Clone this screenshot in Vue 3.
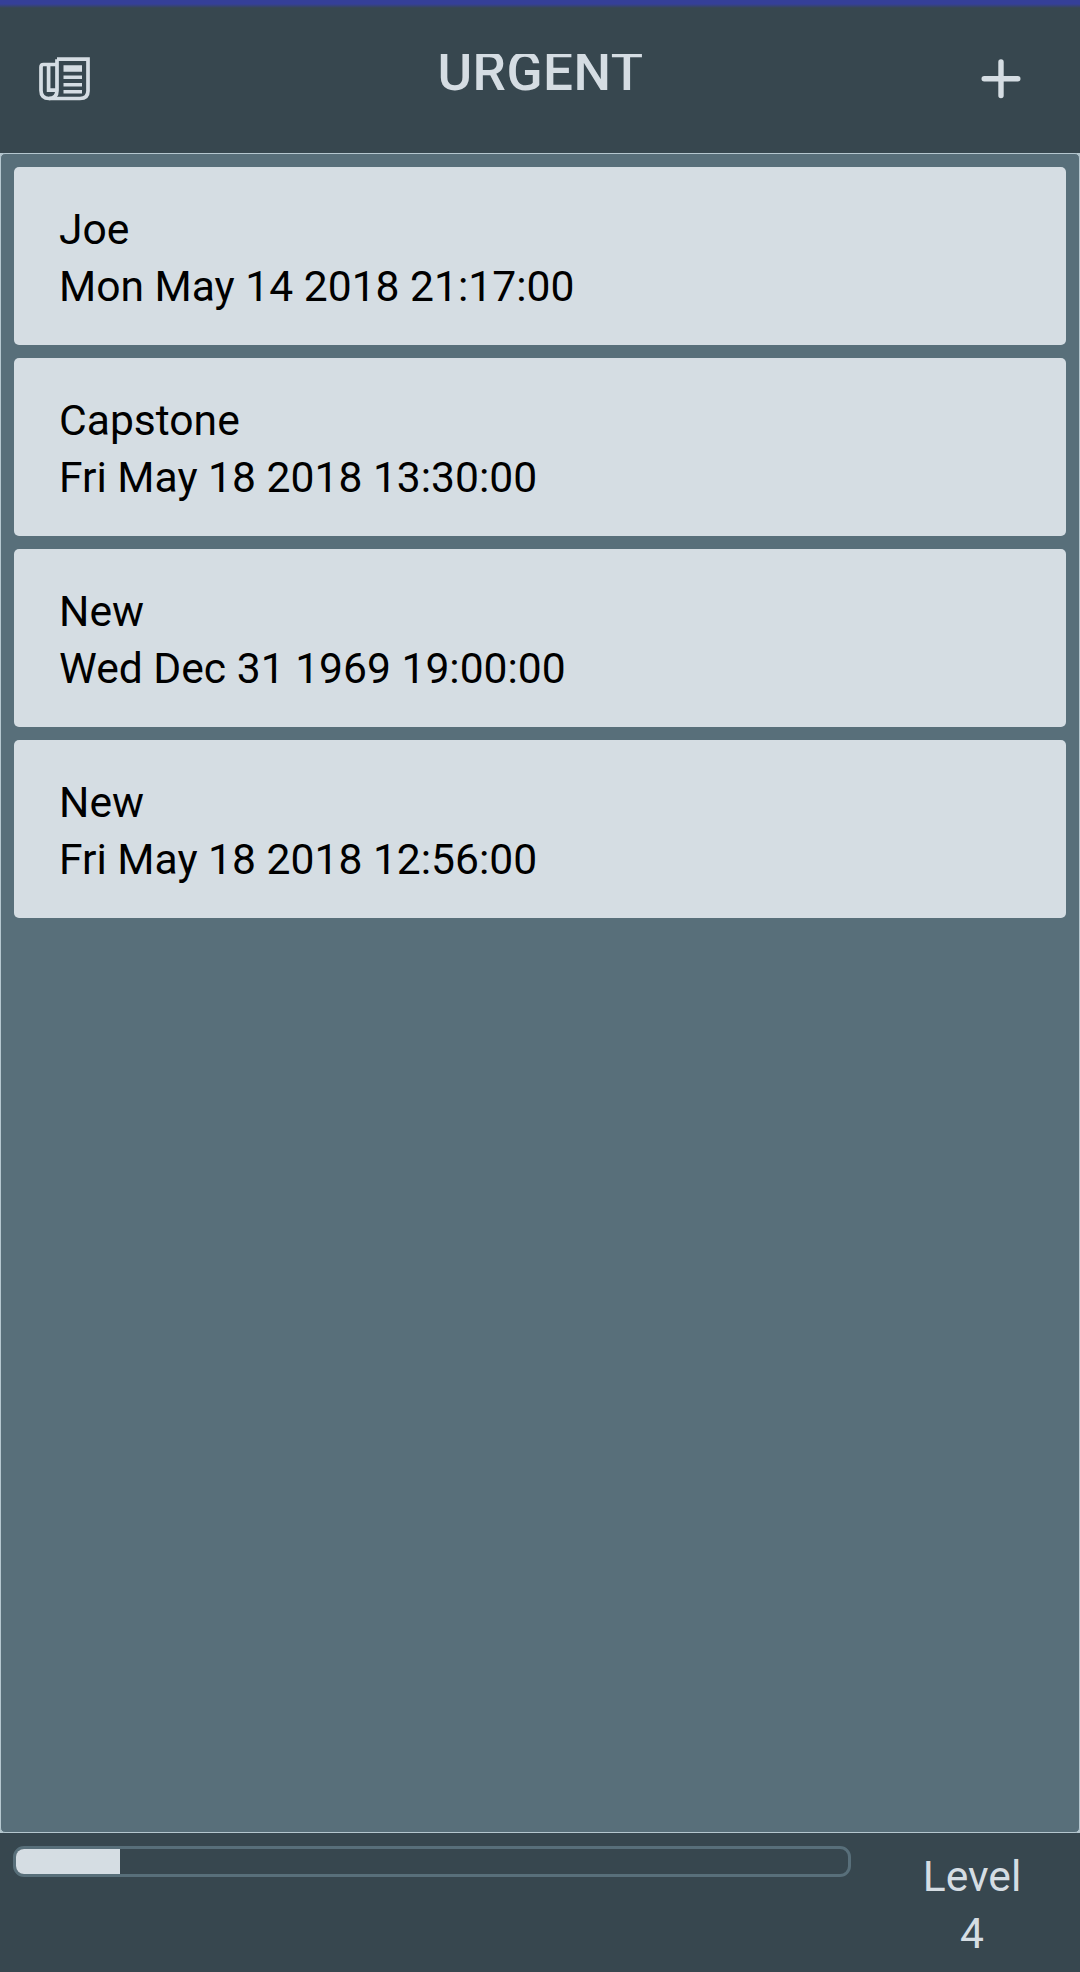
<template>
  <div class="screen">
    <header class="header">
      <button class="icon-button" aria-label="News">
        <svg class="icon" viewBox="0 0 52 44" width="52" height="44">
          <path d="M18 2.2 H49 V34 Q49 41.5 41 41.5 H10 Q2 41.5 2 33.5 V10 Q2 7.5 4.5 7.5 H18" class="line" />
          <path d="M18 2.2 V33.5 Q18 41.5 10 41.5" class="line" />
          <path d="M9.6 8 V33.2 H17" class="line" />
          <path d="M24.5 8.3 h18.5 v6.4 h-18.5z M24.5 18.5 h18.5 v3.6 h-18.5z M24.5 26 h18.5 v3.4 h-18.5z M24.5 33 h18.5 v3.6 h-18.5z" class="solid" />
        </svg>
      </button>
      <h1 class="title">URGENT</h1>
      <button class="icon-button" aria-label="Add">
        <svg class="icon" viewBox="0 0 40 40" width="40" height="40">
          <path d="M20 3 V36.6 M3.2 19.8 H36.8" class="line plus" />
        </svg>
      </button>
    </header>

    <main class="list">
      <div v-for="(task, i) in tasks" :key="i" class="card">
        <div>{{ task.name }}</div>
        <div>{{ task.due }}</div>
      </div>
    </main>

    <footer class="footer">
      <div class="progress">
        <div class="progress-bar" :style="{ width: `${progress}%` }"></div>
      </div>
      <div class="level">
        <div>Level</div>
        <div>{{ level }}</div>
      </div>
    </footer>
  </div>
</template>

<script setup>
import { ref } from 'vue';

const tasks = ref([
  { name: 'Joe', due: 'Mon May 14 2018 21:17:00' },
  { name: 'Capstone', due: 'Fri May 18 2018 13:30:00' },
  { name: 'New', due: 'Wed Dec 31 1969 19:00:00' },
  { name: 'New', due: 'Fri May 18 2018 12:56:00' },
]);
const level = ref(4);
const progress = ref(12.5);
</script>

<style>
body {
  margin: 0;
  background: #37474f;
}
</style>

<style scoped>
.screen {
  display: flex;
  flex-direction: column;
  height: 1972px;
  background: #37474f;
  color: #d5dde3;
  font-family: Roboto, "Liberation Sans", sans-serif;
  font-size: 42.6px;
  line-height: 57px;
  overflow: hidden;
}

.header {
  display: flex;
  justify-content: space-between;
  box-sizing: border-box;
  height: 153px;
  padding: 0 52px;
  background: linear-gradient(#353f98 0, #353f98 4px, #37474f 8px);
}

.icon-button {
  display: flex;
  justify-content: center;
  align-items: center;
  width: 54px;
  height: 158px;
  padding: 0;
  border: 0;
  background: none;
  color: inherit;
}

.icon-button:first-child {
  margin: 0 14px 0 -14px;
}

.icon {
  display: block;
}

.line {
  fill: none;
  stroke: currentColor;
  stroke-width: 3.7;
}

.plus {
  stroke-width: 5.4;
  stroke-linecap: round;
}

.solid {
  fill: currentColor;
}

/* the line box is shorter than the glyphs, so the round tops are cut */
.title {
  height: 50px;
  margin: 54px 0 0 1px;
  font-size: 53px;
  font-weight: 500;
  line-height: 36px;
  letter-spacing: 0.5px;
  overflow: hidden;
}

.list {
  display: flex;
  flex: 1;
  flex-direction: column;
  gap: 13px;
  padding: 13px;
  border: 1px solid #b5c7cf;
  border-radius: 5px;
  background: #586f7a;
  box-shadow: 0 0 0 5px #b5c7cf;
  clip-path: inset(0);
}

.card {
  box-sizing: border-box;
  height: 178px;
  padding: 34px 45px 0;
  border-radius: 5px;
  background: #d5dde3;
  color: #000;
}

.footer {
  display: flex;
  justify-content: space-between;
  box-sizing: border-box;
  height: 139px;
  padding: 13px 13px 0;
}

.progress {
  box-sizing: border-box;
  width: 838px;
  height: 31px;
  border: 3px solid #586f7a;
  border-radius: 11px;
  overflow: hidden;
}

.progress-bar {
  height: 100%;
  background: #d5dde3;
}

.level {
  width: 190px;
  padding-top: 2px;
  text-align: center;
}
</style>
